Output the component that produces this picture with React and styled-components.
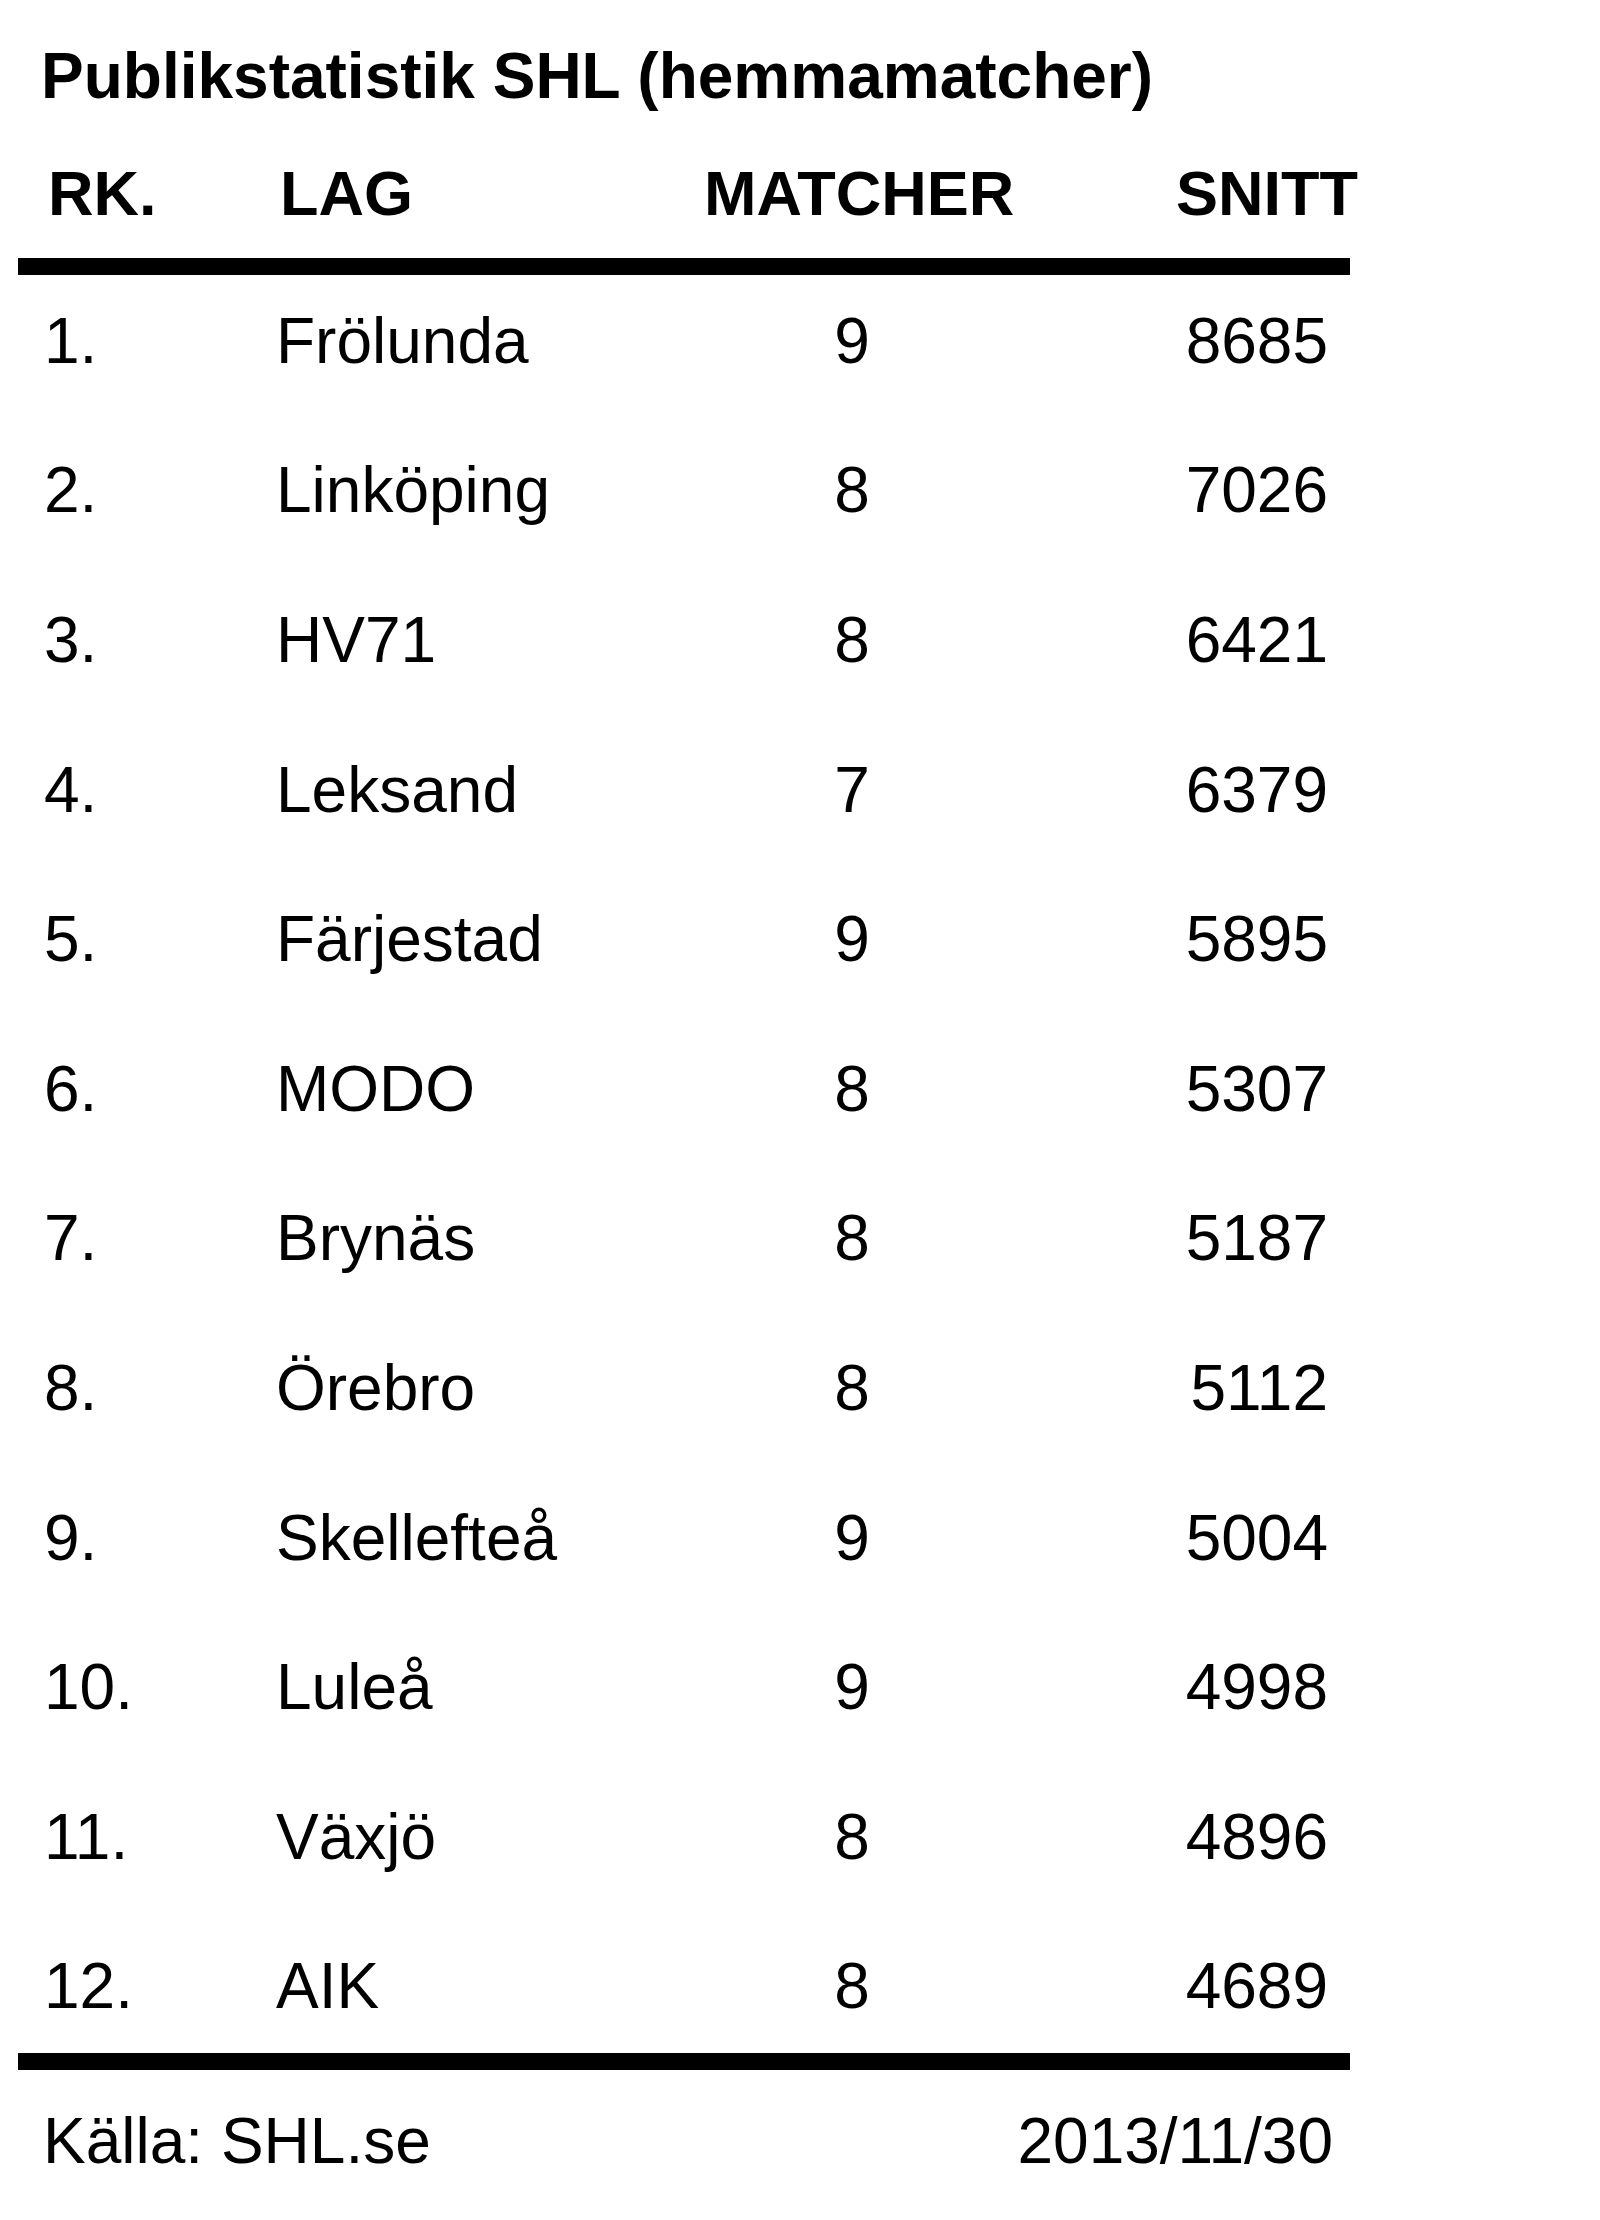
import styled, { createGlobalStyle } from 'styled-components';

const GlobalStyle = createGlobalStyle`
  html, body {
    margin: 0;
    padding: 0;
    background: #fff;
  }
  body {
    font-family: "Liberation Sans", Arial, sans-serif;
    color: #000;
  }
`;

const rows = [
  ['1.', 'Frölunda', 9, 8685],
  ['2.', 'Linköping', 8, 7026],
  ['3.', 'HV71', 8, 6421],
  ['4.', 'Leksand', 7, 6379],
  ['5.', 'Färjestad', 9, 5895],
  ['6.', 'MODO', 8, 5307],
  ['7.', 'Brynäs', 8, 5187],
  ['8.', 'Örebro', 8, 5112],
  ['9.', 'Skellefteå', 9, 5004],
  ['10.', 'Luleå', 9, 4998],
  ['11.', 'Växjö', 8, 4896],
  ['12.', 'AIK', 8, 4689],
];

const App = () => {
  return (
    <Page>
      <GlobalStyle />
      <Title>Publikstatistik SHL (hemmamatcher)</Title>
      <HeadRow>
        <span>RK.</span>
        <span>LAG</span>
        <span>MATCHER</span>
        <HeadSnitt>SNITT</HeadSnitt>
      </HeadRow>
      <Rule />
      <Body>
        {rows.map(([rank, team, games, avg]) => (
          <Row key={rank}>
            <span>{rank}</span>
            <span>{team}</span>
            <Games>{games}</Games>
            <Avg>{avg}</Avg>
          </Row>
        ))}
      </Body>
      <Rule />
      <Footer>
        <span>Källa: SHL.se</span>
        <span>2013/11/30</span>
      </Footer>
    </Page>
  );
};

export default App;

const Page = styled.div`
  width: 1600px;
  min-height: 2220px;
  box-sizing: border-box;
  padding-top: 44px;
`;

const Title = styled.h1`
  margin: 0 0 54px 0;
  padding-left: 41px;
  font-size: 64px;
  line-height: 1;
  font-weight: 700;
  white-space: nowrap;
`;

const HeadRow = styled.div`
  display: grid;
  grid-template-columns: 232px 424px 304px 350px;
  padding-left: 48px;
  font-size: 63px;
  line-height: 1;
  font-weight: 700;
  margin-bottom: 33px;
  white-space: nowrap;
`;

const HeadSnitt = styled.span`
  text-align: right;
`;

const Rule = styled.div`
  margin-left: 18px;
  width: 1332px;
  height: 17px;
  background: #000;
`;

const Body = styled.div`
  display: flex;
  flex-direction: column;
  gap: 85.6px;
  padding: 33.8px 0 34.6px;
`;

const Row = styled.div`
  display: grid;
  grid-template-columns: 232px 424px 304px 324px;
  padding-left: 44px;
  font-size: 64px;
  line-height: 1;
  height: 64px;
  white-space: nowrap;
`;

const Games = styled.span`
  text-align: center;
`;

const Avg = styled.span`
  text-align: right;
`;

const Footer = styled.div`
  display: flex;
  justify-content: space-between;
  width: 1290px;
  margin-top: 38.8px;
  padding-left: 43px;
  font-size: 64px;
  line-height: 1;
`;
